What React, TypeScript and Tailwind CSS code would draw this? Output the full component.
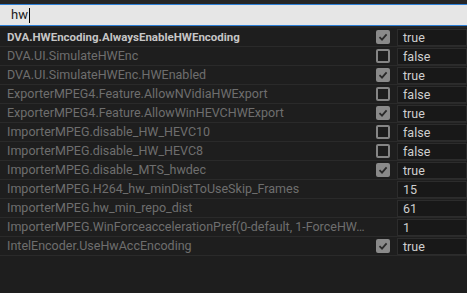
import React from "react";

type Row = { key: string; checkbox?: boolean; checked?: boolean; value: string; bold?: boolean };

const rows: Row[] = [
  { key: "DVA.HWEncoding.AlwaysEnableHWEncoding", checkbox: true, checked: true, value: "true", bold: true },
  { key: "DVA.UI.SimulateHWEnc", checkbox: true, checked: false, value: "false" },
  { key: "DVA.UI.SimulateHWEnc.HWEnabled", checkbox: true, checked: true, value: "true" },
  { key: "ExporterMPEG4.Feature.AllowNVidiaHWExport", checkbox: true, checked: false, value: "false" },
  { key: "ExporterMPEG4.Feature.AllowWinHEVCHWExport", checkbox: true, checked: true, value: "true" },
  { key: "ImporterMPEG.disable_HW_HEVC10", checkbox: true, checked: false, value: "false" },
  { key: "ImporterMPEG.disable_HW_HEVC8", checkbox: true, checked: false, value: "false" },
  { key: "ImporterMPEG.disable_MTS_hwdec", checkbox: true, checked: true, value: "true" },
  { key: "ImporterMPEG.H264_hw_minDistToUseSkip_Frames", value: "15" },
  { key: "ImporterMPEG.hw_min_repo_dist", value: "61" },
  { key: "ImporterMPEG.WinForceaccelerationPref(0-default, 1-ForceHW, 2-ForceSW)", value: "1" },
  { key: "IntelEncoder.UseHwAccEncoding", checkbox: true, checked: true, value: "true" },
];

function Check({ checked }: { checked?: boolean }) {
  if (checked) {
    return (
      <div className="w-[14px] h-[14px] rounded-[2px] bg-[#8a8a8a] flex items-center justify-center">
        <svg width="10" height="10" viewBox="0 0 10 10">
          <path d="M1.5 5.2 L4 7.6 L8.6 2.4" fill="none" stroke="#2a2a2a" strokeWidth="1.8" />
        </svg>
      </div>
    );
  }
  return <div className="w-[14px] h-[14px] rounded-[2px] border-2 border-[#858585] bg-[#1d1d1d]" />;
}

export default function App() {
  return (
    <div className="w-[467px] h-[293px] bg-[#1e1e1e] overflow-hidden" style={{ fontFamily: "Roboto, 'Noto Sans', sans-serif" }}>
      <div className="bg-[#262626] pt-[4px] pb-[2px]">
        <div className="h-[22px] bg-[#e6e6e6] border-y border-[#2d7fd6] flex items-center pl-[11px] text-[13px] text-[#1a1a1a]">
          hw<span className="w-px h-[15px] bg-black ml-px" />
        </div>
      </div>
      <div>
        {rows.map((r, i) => (
          <div key={i} className="h-[19px] flex items-center border-b border-[#2a2a2a]">
            <div
              className={`w-[370px] pl-[7px] pr-[4px] truncate leading-[18px] ${
                r.bold ? "text-[11.5px] font-bold text-[#c6c6c6]" : "text-[12.5px] text-[#6e6e6e]"
              }`}
            >
              {r.key}
            </div>
            <div className="w-[27px] flex items-center justify-start pl-[6px]">
              {r.checkbox ? <Check checked={r.checked} /> : null}
            </div>
            <div className="flex-1 h-[17px] bg-[#181818] border border-[#2c2c2c] pl-[5px] text-[12.5px] leading-[15px] text-[#cfcfcf]">
              {r.value}
            </div>
          </div>
        ))}
      </div>
    </div>
  );
}
